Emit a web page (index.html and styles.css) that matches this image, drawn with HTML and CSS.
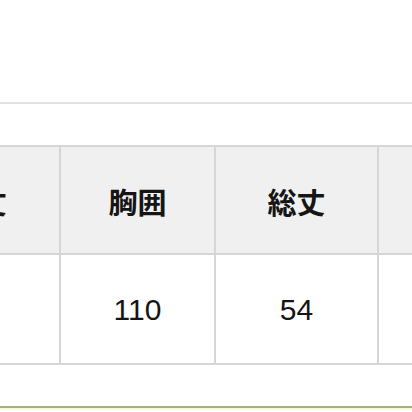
FILE: index.html
```html
<!DOCTYPE html>
<html lang="ja">
<head>
<meta charset="utf-8">
<link rel="stylesheet" href="styles.css">
</head>
<body>
<div class="page">
  <div class="topline"></div>
  <div class="table">
    <div class="cell head c1">着丈</div>
    <div class="cell head c2">胸囲</div>
    <div class="cell head c3">総丈</div>
    <div class="cell head c4"></div>
    <div class="cell body c1"></div>
    <div class="cell body c2">110</div>
    <div class="cell body c3">54</div>
    <div class="cell body c4"></div>
  </div>
  <div class="footer"></div>
</div>
</body>
</html>
```
FILE: styles.css
```css
html, body {
  margin: 0;
  padding: 0;
  background: #ffffff;
}
body {
  width: 412px;
  height: 412px;
  overflow: hidden;
  font-family: "Liberation Sans", "Noto Sans CJK JP", sans-serif;
  color: #151515;
}
.page {
  width: 412px;
  height: 412px;
  overflow: hidden;
  padding-top: 102px;
  box-sizing: border-box;
}
.topline {
  height: 2px;
  background: #e2e2e2;
  margin-bottom: 41px;
}
.table {
  display: grid;
  grid-template-columns: 155px 155px 163px 160px;
  grid-template-rows: 108px 110px;
  margin-left: -94px;
  width: 633px;
  border-top: 2px solid #d6d6d6;
}
.cell {
  display: flex;
  align-items: center;
  justify-content: center;
  border-right: 2px solid #d6d6d6;
  border-bottom: 2px solid #d6d6d6;
}
.head {
  background: #f0f0f0;
  font-family: "Noto Sans CJK JP", sans-serif;
  font-weight: 700;
  font-size: 29px;
  padding-top: 2px;
}
.c1.head {
  justify-content: flex-end;
  padding-right: 52px;
}
.body {
  background: #ffffff;
  font-size: 30px;
  padding-top: 2px;
}
.footer {
  margin-top: 41px;
  height: 2px;
  background: #a9b172;
  box-shadow: 0 2px 0 #f6f9e2, 0 6px 0 #f6f9e2;
}
```
